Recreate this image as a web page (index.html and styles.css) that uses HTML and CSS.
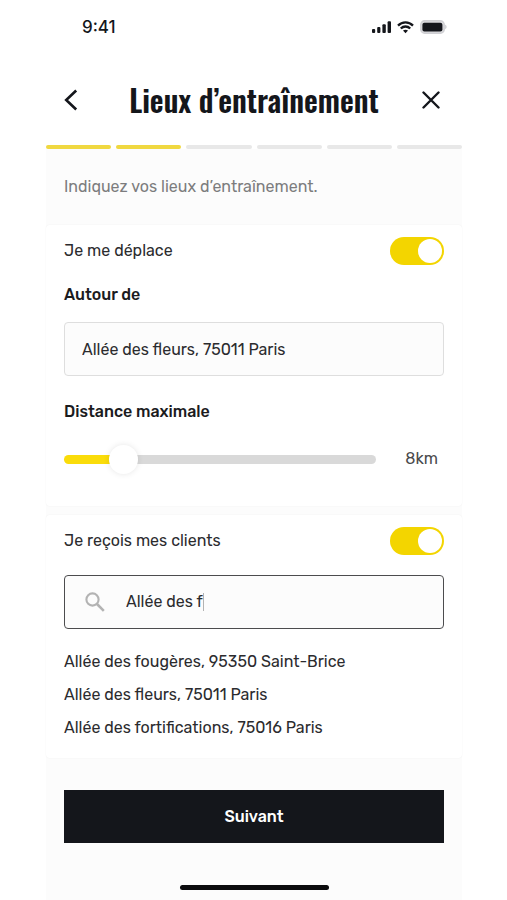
FILE: index.html
```html
<!DOCTYPE html>
<html lang="fr">
<head>
    <meta charset="UTF-8">
    <meta name="viewport" content="width=device-width, initial-scale=1">
    <title>Lieux d’entraînement</title>
    <link rel="stylesheet" href="styles.css">
</head>
<body>
<div class="screen">
    <div class="status-bar">
        <span class="time">9:41</span>
        <div class="status-icons">
            <svg width="19" height="12" viewBox="0 0 19 12" fill="#14161b">
                <rect x="0" y="8" width="3.2" height="4" rx="1"/>
                <rect x="5.2" y="6" width="3.2" height="6" rx="1"/>
                <rect x="10.4" y="3.2" width="3.4" height="8.8" rx="1"/>
                <rect x="15.6" y="0.2" width="3.4" height="11.8" rx="1"/>
            </svg>
            <svg width="17" height="13" viewBox="0 0 17 13" fill="none" stroke="#14161b" stroke-width="2.3">
                <path d="M1 4.6C5.2 0.3 11.8 0.3 16 4.6"/>
                <path d="M3.8 7.5C6.5 4.8 10.5 4.8 13.2 7.5"/>
                <path d="M8.5 12.2L6 9.6C7.5 8.3 9.5 8.3 11 9.6Z" fill="#14161b" stroke="none"/>
            </svg>
            <svg width="27" height="14" viewBox="0 0 27 14">
                <rect x="0.8" y="0.8" width="23.4" height="12.4" rx="3.8" fill="#d9d9dc" stroke="#cfcfd3" stroke-width="1.4"/>
                <rect x="2.4" y="2.8" width="20" height="8.6" rx="2" fill="#14161b"/>
                <path d="M25.2 4.8C27 5.4 27 8.6 25.2 9.2Z" fill="#c9c9cd"/>
            </svg>
        </div>
    </div>

    <header class="header">
        <button class="icon-button" type="button" aria-label="Retour">
            <svg width="14" height="22" viewBox="0 0 14 22" fill="none" stroke="#14161b" stroke-width="2.6">
                <path d="M12.2 1.5L2.2 11L12.2 20.5"/>
            </svg>
        </button>
        <h1>Lieux d’entraînement</h1>
        <button class="icon-button close" type="button" aria-label="Fermer">
            <svg width="18" height="18" viewBox="0 0 18 18" fill="none" stroke="#14161b" stroke-width="2.4" stroke-linecap="round">
                <path d="M1.5 1.5L16.5 16.5M16.5 1.5L1.5 16.5"/>
            </svg>
        </button>
    </header>

    <div class="steps">
        <span class="step done"></span>
        <span class="step done"></span>
        <span class="step"></span>
        <span class="step"></span>
        <span class="step"></span>
        <span class="step"></span>
    </div>

    <form class="content">
        <p class="intro">Indiquez vos lieux d’entraînement.</p>

        <section class="card">
            <div class="row">
                <label for="travel">Je me déplace</label>
                <input class="switch" id="travel" type="checkbox" checked>
            </div>
            <label class="field-label" for="around">Autour de</label>
            <input class="text-field" id="around" type="text" value="Allée des fleurs, 75011 Paris">
            <label class="field-label distance-label" for="distance">Distance maximale</label>
            <div class="row distance">
                <input class="slider" id="distance" type="range" min="0" max="50" value="8" style="--fill: 16%">
                <output id="distance-value" for="distance">8km</output>
            </div>
        </section>

        <section class="card">
            <div class="row">
                <label for="host">Je reçois mes clients</label>
                <input class="switch" id="host" type="checkbox" checked>
            </div>
            <div class="search-field">
                <svg width="20" height="20" viewBox="0 0 20 20" fill="none" stroke="#b3b3b3" stroke-width="2.1">
                    <circle cx="7.5" cy="7.5" r="6.1"/>
                    <path d="M12 12L18.8 18.8" stroke-width="2.6"/>
                </svg>
                <input id="search" type="text" value="Allée des f" aria-label="Adresse">
                <span class="caret"></span>
            </div>
            <ul class="suggestions">
                <li>Allée des fougères, 95350 Saint-Brice</li>
                <li>Allée des fleurs, 75011 Paris</li>
                <li>Allée des fortifications, 75016 Paris</li>
            </ul>
        </section>

        <div class="footer">
            <button class="button-next" type="submit">Suivant</button>
        </div>
        <div class="home-indicator"></div>
    </form>
</div>
</body>
</html>
```
FILE: styles.css
```css
* {
    box-sizing: border-box;
}

body {
    margin: 0;
    padding: 0 45px 0 46px;
    background: #fff;
    color: #2b2b2e;
    font: 16px/20px Rubik, Roboto, sans-serif;
}

button,
input {
    font: inherit;
    color: inherit;
}

.screen {
    max-width: 480px;
    min-height: 100vh;
    margin: 0 auto;
    display: flex;
    flex-direction: column;
}

/* status bar */

.status-bar {
    display: flex;
    justify-content: space-between;
    align-items: center;
    height: 54px;
    padding: 0 15px 0 36px;
}

.time {
    font: 500 17px/20px Inter, sans-serif;
    color: #14161b;
}

.status-icons {
    display: flex;
    align-items: center;
    gap: 6px;
}

/* header */

.header {
    display: flex;
    justify-content: space-between;
    align-items: center;
    height: 91px;
    padding: 0 18px;
}

h1 {
    margin: 0;
    font: 600 30px/40px Oswald, "Roboto Condensed", "Liberation Sans Narrow", sans-serif;
    color: #14161b;
    white-space: nowrap;
}

.icon-button {
    display: flex;
    align-items: center;
    width: 26px;
    height: 40px;
    padding: 0;
    border: 0;
    background: none;
    cursor: pointer;
}

.icon-button.close {
    justify-content: center;
}

.steps {
    display: flex;
    gap: 5px;
}

.step {
    flex: 1;
    height: 4px;
    border-radius: 2px;
    background: #e8e8e8;
}

.step.done {
    background: #f0d840;
}

/* form */

.content {
    flex: 1;
    display: flex;
    flex-direction: column;
    background: #fcfcfc;
}

.intro {
    margin: 0;
    padding: 28px 18px;
    color: #7c7c7e;
}

.card {
    margin-bottom: 9px;
    padding: 12px 18px 20px;
    border-radius: 4px;
    background: #fff;
    box-shadow: 0 0 2px rgba(0, 0, 0, 0.06);
}

.row {
    display: flex;
    justify-content: space-between;
    align-items: center;
}

.switch {
    appearance: none;
    display: flex;
    width: 54px;
    height: 28px;
    margin: 0;
    padding: 2px;
    border-radius: 14px;
    background: #d9d9d9;
    cursor: pointer;
}

.switch:checked {
    justify-content: flex-end;
    background: #f3d500;
}

.switch::before {
    content: "";
    width: 24px;
    height: 24px;
    border-radius: 50%;
    background: #fff;
}

.field-label {
    display: block;
    margin: 20px 0 17px;
    font-weight: 500;
    color: #1b1b1e;
}

.distance-label {
    margin: 26px 0 22px;
}

.text-field,
.search-field {
    width: 100%;
    height: 54px;
    padding: 0 17px;
    border: 1px solid #dedede;
    border-radius: 4px;
    background: #fcfcfc;
}

.distance {
    padding: 0 6px 12px 0;
    gap: 29px;
    color: #4a4a4c;
}

.slider {
    appearance: none;
    flex: 1;
    min-width: 0;
    height: 30px;
    margin: 0;
    background: none;
}

.slider::-webkit-slider-runnable-track {
    height: 9px;
    border-radius: 5px;
    background: linear-gradient(to right, #fadc0a var(--fill), #d9d9d9 var(--fill));
}

.slider::-webkit-slider-thumb {
    appearance: none;
    width: 29px;
    height: 29px;
    margin-top: -10px;
    border-radius: 50%;
    background: #fff;
    box-shadow: 0 0 6px rgba(0, 0, 0, 0.1);
}

.search-field {
    display: flex;
    align-items: center;
    margin-top: 20px;
    padding: 0 20px;
    border-color: #4c4c4e;
}

.search-field input {
    field-sizing: content;
    margin-left: 21px;
    padding: 0;
    border: 0;
    outline: none;
    background: none;
}

.caret {
    width: 1px;
    height: 18px;
    background: #b3b3b3;
}

.suggestions {
    margin: 0;
    padding: 23px 0 0;
    list-style: none;
}

.suggestions li {
    margin-bottom: 13px;
}

.suggestions li:last-child {
    margin-bottom: 0;
}

.footer {
    padding: 23px 18px 42px;
}

.button-next {
    display: block;
    width: 100%;
    height: 53px;
    border: 0;
    background: #14161b;
    font-weight: 500;
    color: #fff;
    cursor: pointer;
}

.home-indicator {
    width: 149px;
    height: 5px;
    margin: 0 auto 10px;
    border-radius: 3px;
    background: #0c0c0e;
}
```
